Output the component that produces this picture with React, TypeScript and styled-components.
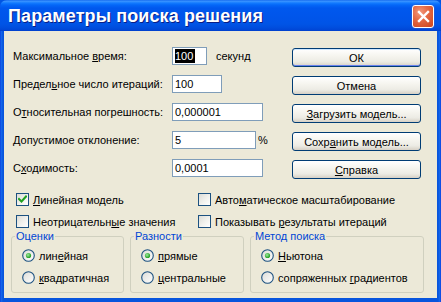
import React from "react";
import styled, { createGlobalStyle, css } from "styled-components";

const Global = createGlobalStyle`
  html, body { margin: 0; padding: 0; background: #0054E3; }
  body { width: 441px; height: 302px; overflow: hidden; font-family: "Liberation Sans", Tahoma, sans-serif; font-size: 11px; color: #000; }
  #root { width: 441px; height: 302px; }
`;

const Window = styled.div`
  width: 441px;
  height: 302px;
  box-sizing: border-box;
  display: flex;
  flex-direction: column;
  background: linear-gradient(to right, #0831D9 0, #166AEE 1px, #0855DD 3px, #0855DD calc(100% - 3px), #166AEE calc(100% - 1px), #0831D9 100%);
  border-radius: 7px 7px 0 0;
  overflow: hidden;
`;

const TitleBar = styled.div`
  height: 31px;
  flex: none;
  display: flex;
  align-items: center;
  justify-content: space-between;
  padding: 0 7px 0 8px;
  box-sizing: border-box;
  background: linear-gradient(to bottom, #0A5FEA 0, #3D95FF 1px, #2A8AFF 2px, #137BFF 3px, #0467F8 5px, #0058EE 8px, #0055EA 18px, #0054E6 24px, #004FDF 27px, #0046D6 30px, #003DC9 31px);
`;

const Title = styled.div`
  font-family: "Liberation Sans", Arial, sans-serif;
  font-weight: bold;
  font-size: 18px;
  color: #fff;
  text-shadow: 1px 1px 0 #0A1E84;
  letter-spacing: 0.1px;
  margin-top: 1px;
`;

const CloseButton = styled.div`
  width: 22px;
  height: 23px;
  margin-top: 2px;
  box-sizing: border-box;
  border: 1px solid #fff;
  border-radius: 3px;
  background: radial-gradient(circle at 35% 30%, #F29A7E 0, #E56A45 40%, #CC431A 100%);
  display: flex;
  align-items: center;
  justify-content: center;
  box-shadow: 0 0 0 0.5px #3A5FC8;
`;

const Client = styled.div`
  flex: 1;
  margin: 0 4px 4px 4px;
  background: #ECE9D8;
  display: flex;
  flex-direction: column;
  padding-top: 16px;
  box-sizing: border-box;
`;

const TopSection = styled.div`
  display: grid;
  grid-template-columns: 279px 129px;
  padding-left: 9px;
`;

const FormColumn = styled.div`
  display: flex;
  flex-direction: column;
  gap: 10px;
`;

const FormRow = styled.div`
  display: flex;
  align-items: center;
  height: 18px;
`;

const Label = styled.label`
  width: 159px;
  flex: none;
  white-space: nowrap;
`;

const Input = styled.div<{ $w: number }>`
  width: ${(p) => p.$w}px;
  height: 18px;
  box-sizing: border-box;
  border: 1px solid #7F9DB9;
  background: #fff;
  padding: 0 2px;
  display: flex;
  align-items: center;
  white-space: nowrap;
  overflow: hidden;
`;

const Selected = styled.span`
  background: #000;
  color: #fff;
  padding: 1px 2px 1px 0;
`;

const Suffix = styled.span<{ $gap: number }>`
  margin-left: ${(p) => p.$gap}px;
`;

const ButtonColumn = styled.div`
  display: flex;
  flex-direction: column;
  gap: 9px;
  margin-top: 1px;
`;

const Button = styled.div<{ $default?: boolean }>`
  height: 19px;
  box-sizing: border-box;
  border: 1px solid #003C74;
  border-radius: 3px;
  background: linear-gradient(to bottom, #FFFFFF 0%, #F6F5EF 40%, #ECEBE4 75%, #D6D0C5 100%);
  display: flex;
  align-items: center;
  justify-content: center;
  white-space: nowrap;
  ${(p) =>
    p.$default &&
    css`
      box-shadow: inset 0 1px 0 #CEE7FF, inset 0 -1px 0 #6982EE;
    `}
`;

const U = styled.span`
  text-decoration: underline;
  text-underline-offset: 1px;
`;

const CheckGrid = styled.div`
  display: grid;
  grid-template-columns: 182px auto;
  row-gap: 9px;
  padding-left: 12px;
  margin-top: 14px;
`;

const CheckItem = styled.div`
  display: flex;
  align-items: center;
  gap: 4px;
  height: 13px;
  white-space: nowrap;
`;

const Box = styled.div`
  width: 13px;
  height: 13px;
  flex: none;
  box-sizing: border-box;
  border: 1px solid #1C5180;
  background: linear-gradient(135deg, #DCDCD7 0%, #F2F2EE 55%, #FFFFFF 100%);
  display: flex;
  align-items: center;
  justify-content: center;
`;

const GroupRow = styled.div`
  display: flex;
  gap: 6px;
  padding-left: 7px;
  margin-top: 2px;
`;

const Group = styled.fieldset<{ $w: number }>`
  width: ${(p) => p.$w}px;
  height: 63px;
  box-sizing: border-box;
  margin: 0;
  border: 1px solid #D0D0BF;
  border-radius: 3px;
  padding: 6px 0 0 10px;
  display: flex;
  flex-direction: column;
  gap: 9px;
  min-width: 0;
`;

const Legend = styled.legend`
  color: #0046D5;
  padding: 0 1px;
  margin-left: -7px;
  line-height: 13px;
`;

const RadioItem = styled.div`
  display: flex;
  align-items: center;
  gap: 4px;
  height: 13px;
  white-space: nowrap;
`;

const Check = ({ checked }: { checked?: boolean }) => (
  <Box>
    {checked && (
      <svg width="9" height="9" viewBox="0 0 9 9">
        <path d="M1 4 L3.5 6.5 L8 1.5" fill="none" stroke="#21A121" strokeWidth="2" strokeLinecap="square" />
      </svg>
    )}
  </Box>
);

const Radio = ({ checked }: { checked?: boolean }) => (
  <svg width="13" height="13" viewBox="0 0 13 13" style={{ flex: "none" }}>
    <defs>
      <linearGradient id="rg" x1="0" y1="0" x2="1" y2="1">
        <stop offset="0" stopColor="#DCDCD7" />
        <stop offset="1" stopColor="#FFFFFF" />
      </linearGradient>
      <radialGradient id="dot" cx="0.4" cy="0.4" r="0.6">
        <stop offset="0" stopColor="#9EE89E" />
        <stop offset="1" stopColor="#1E9E1E" />
      </radialGradient>
    </defs>
    <circle cx="6.5" cy="6.5" r="5.8" fill="url(#rg)" stroke="#1C5180" strokeWidth="1.1" />
    {checked && <circle cx="6.5" cy="6.5" r="2.6" fill="url(#dot)" />}
  </svg>
);

export default function App() {
  return (
    <>
      <Global />
      <Window>
        <TitleBar>
          <Title>Параметры поиска решения</Title>
          <CloseButton>
            <svg width="13" height="13" viewBox="0 0 13 13">
              <path d="M2 2 L11 11 M11 2 L2 11" stroke="#fff" strokeWidth="2.4" strokeLinecap="square" />
            </svg>
          </CloseButton>
        </TitleBar>
        <Client>
          <TopSection>
            <FormColumn>
              <FormRow>
                <Label>Максимальное <U>в</U>ремя:</Label>
                <Input $w={35}>
                  <Selected>100</Selected>
                </Input>
                <Suffix $gap={9}>секунд</Suffix>
              </FormRow>
              <FormRow>
                <Label>Предел<U>ь</U>ное число итераций:</Label>
                <Input $w={50}>100</Input>
              </FormRow>
              <FormRow>
                <Label>О<U>т</U>носительная погрешность:</Label>
                <Input $w={91}>0,000001</Input>
              </FormRow>
              <FormRow>
                <Label><U>Д</U>опустимое отклонение:</Label>
                <Input $w={84}>5</Input>
                <Suffix $gap={2}>%</Suffix>
              </FormRow>
              <FormRow>
                <Label>С<U>х</U>одимость:</Label>
                <Input $w={91}>0,0001</Input>
              </FormRow>
            </FormColumn>
            <ButtonColumn>
              <Button $default>ОК</Button>
              <Button>Отмена</Button>
              <Button><U>З</U>агрузить модель...</Button>
              <Button>Сохр<U>а</U>нить модель...</Button>
              <Button><U>С</U>правка</Button>
            </ButtonColumn>
          </TopSection>
          <CheckGrid>
            <CheckItem>
              <Check checked />
              <span><U>Л</U>инейная модель</span>
            </CheckItem>
            <CheckItem>
              <Check />
              <span>Авто<U>м</U>атическое масштабирование</span>
            </CheckItem>
            <CheckItem>
              <Check />
              <span>Неотрицательн<U>ы</U>е значения</span>
            </CheckItem>
            <CheckItem>
              <Check />
              <span>Показывать <U>р</U>езультаты итераций</span>
            </CheckItem>
          </CheckGrid>
          <GroupRow>
            <Group $w={113}>
              <Legend>Оценки</Legend>
              <RadioItem>
                <Radio checked />
                <span>лин<U>е</U>йная</span>
              </RadioItem>
              <RadioItem>
                <Radio />
                <span><U>к</U>вадратичная</span>
              </RadioItem>
            </Group>
            <Group $w={114}>
              <Legend>Разности</Legend>
              <RadioItem>
                <Radio checked />
                <span><U>п</U>рямые</span>
              </RadioItem>
              <RadioItem>
                <Radio />
                <span><U>ц</U>ентральные</span>
              </RadioItem>
            </Group>
            <Group $w={174}>
              <Legend>Метод поиска</Legend>
              <RadioItem>
                <Radio checked />
                <span><U>Н</U>ьютона</span>
              </RadioItem>
              <RadioItem>
                <Radio />
                <span>сопряженных <U>г</U>радиентов</span>
              </RadioItem>
            </Group>
          </GroupRow>
        </Client>
      </Window>
    </>
  );
}
